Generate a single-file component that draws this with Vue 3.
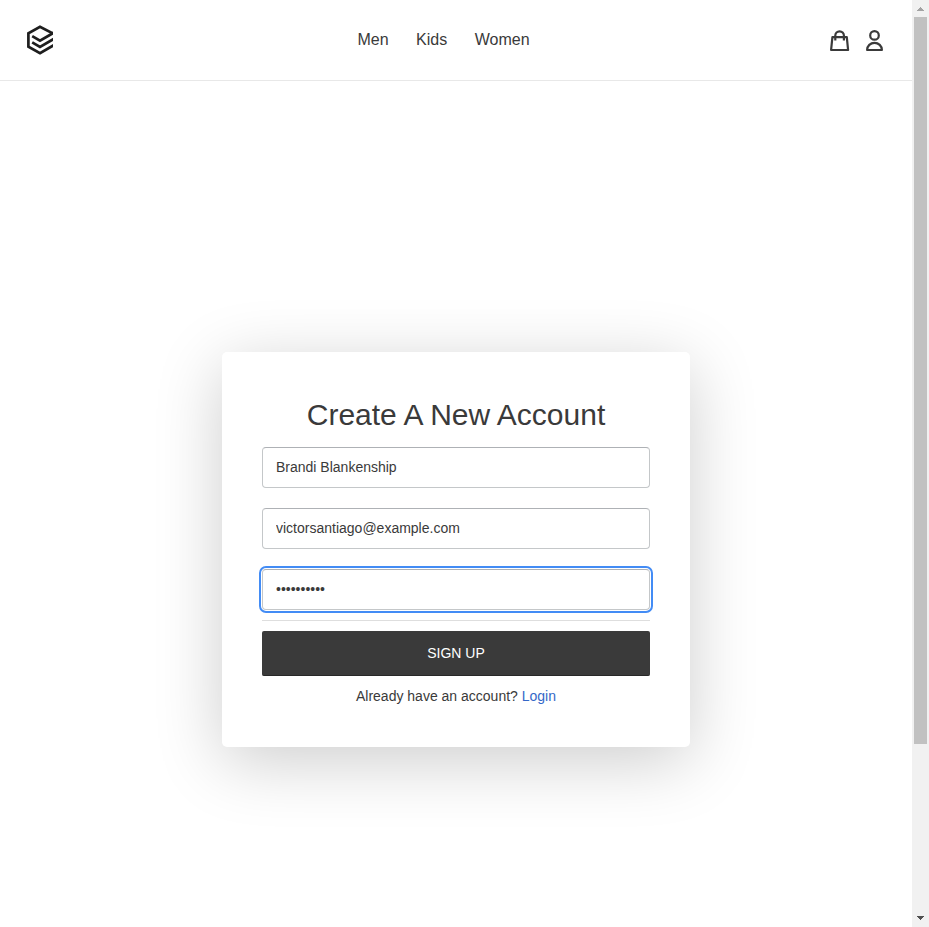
<script setup>
import { ref } from 'vue'

const links = ['Men', 'Kids', 'Women']
const name = ref('Brandi Blankenship')
const email = ref('victorsantiago@example.com')
const password = ref('••••••••••')
</script>

<template>
  <div class="window">
    <div class="page">
      <header class="navbar">
        <a class="brand" aria-label="Home">
          <svg width="26" height="30" viewBox="0 0 26 30" fill="none" stroke="#1e1e1e" stroke-width="2.7">
            <path d="M25.6 8.8V8.2L13 1.7 1.4 8.2v13.6L13 28.2l14-8.1" />
            <path d="M5.2 11.1l7.8 4.6L27 7.6" />
            <path d="M5.2 17.3l7.8 4.6 14-8.1" />
          </svg>
        </a>
        <nav class="links">
          <a v-for="link in links" :key="link">{{ link }}</a>
        </nav>
        <div class="actions">
          <svg width="20" height="22" viewBox="0 0 20 22" fill="none" stroke="#3a3a3a" stroke-width="2.2" stroke-linejoin="round">
            <path d="M2.4 7.2h14.4L18.1 20h-17z" />
            <path d="M5.3 10.5V5.6a4.3 4.3 0 0 1 8.6 0v4.9" />
          </svg>
          <svg width="18" height="22" viewBox="0 0 18 22" fill="none" stroke="#3a3a3a" stroke-width="2.2" stroke-linejoin="round">
            <circle cx="8.5" cy="5.4" r="4.3" />
            <path d="M1.1 20a7.4 7.2 0 0 1 14.8 0z" />
          </svg>
        </div>
      </header>
      <main class="content">
        <form class="card" @submit.prevent>
          <h1>Create A New Account</h1>
          <div class="fields">
            <input v-model="name" class="field" type="text" spellcheck="false" />
            <input v-model="email" class="field" type="text" spellcheck="false" />
            <input v-model="password" class="field active" type="text" spellcheck="false" />
          </div>
          <hr />
          <button type="submit">SIGN UP</button>
          <p>Already have an account? <a class="login">Login</a></p>
        </form>
      </main>
    </div>
    <aside class="scrollbar">
      <svg width="17" height="17" viewBox="0 0 17 17" shape-rendering="crispEdges"><path d="M5 11h7L8.5 7z" fill="#a3a3a3" /></svg>
      <div class="thumb"></div>
      <svg width="17" height="17" viewBox="0 0 17 17" shape-rendering="crispEdges"><path d="M5 6h7L8.5 10z" fill="#505050" /></svg>
    </aside>
  </div>
</template>

<style>
body {
  margin: 0;
  overflow: hidden;
}
</style>

<style scoped>
.window {
  display: flex;
  height: 927px;
  background: #fff;
  color: #3a3a3a;
  font-family: "Liberation Sans", Arial, sans-serif;
}
.page {
  flex: 1;
  display: flex;
  flex-direction: column;
}
svg {
  display: block;
}
.navbar {
  box-sizing: border-box;
  height: 81px;
  padding: 0 28px 1px 27px;
  border-bottom: 1px solid #e8e8e8;
  display: grid;
  grid-template-columns: 1fr auto 1fr;
  align-items: center;
}
.links {
  display: flex;
  gap: 27.5px;
  padding-right: 24px;
  font-size: 16px;
  line-height: 24px;
}
.actions {
  display: flex;
  justify-content: flex-end;
  gap: 16px;
  padding-top: 2px;
}
.content {
  flex: 1;
  display: flex;
  flex-direction: column;
  align-items: center;
  padding-top: 271px;
}
.card {
  box-sizing: border-box;
  width: 468px;
  height: 395px;
  padding: 40px;
  border-radius: 5px;
  background: #fff;
  box-shadow: 0 14px 68px rgba(0, 0, 0, 0.2);
}
h1 {
  margin: 0 0 10px;
  font-size: 30px;
  line-height: 45px;
  font-weight: 400;
  text-align: center;
}
.fields {
  display: flex;
  flex-direction: column;
  gap: 20px;
}
.field {
  box-sizing: border-box;
  width: 100%;
  height: 41px;
  padding: 0 13px 2px;
  border: 1px solid #c4c7c9;
  border-top-color: #aeb1b5;
  border-radius: 4px;
  outline: none;
  background: #fff;
  color: #3a3a3a;
  font: 14px "Liberation Sans", Arial, sans-serif;
}
.field.active {
  outline: 2px solid #438cf5;
  outline-offset: 1px;
}
hr {
  margin: 10px 0;
  border: 0;
  border-top: 1px solid #dedede;
}
button {
  display: block;
  box-sizing: border-box;
  width: 100%;
  height: 45px;
  padding: 0;
  border: 0;
  border-bottom: 1px solid #282828;
  border-radius: 2px;
  background: #3a3a3a;
  color: #fff;
  font: 14px "Liberation Sans", Arial, sans-serif;
}
p {
  margin: 10px 0 0;
  font-size: 14px;
  line-height: 21px;
  text-align: center;
}
.login {
  color: #3468c8;
}
.scrollbar {
  width: 17px;
  display: flex;
  flex-direction: column;
  background: #f1f1f1;
}
.thumb {
  width: 13px;
  height: 727px;
  margin: 0 2px auto;
  background: #c1c1c1;
}
</style>
